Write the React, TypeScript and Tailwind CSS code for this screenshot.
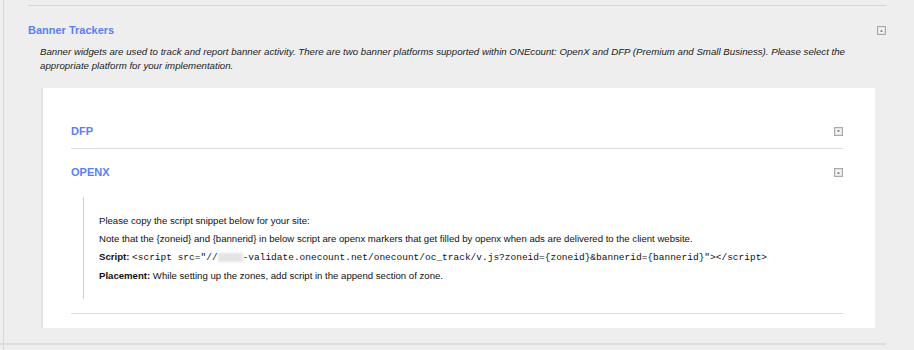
const ToggleIcon = ({ open }: { open: boolean }) => (
    <svg width="9" height="9" viewBox="0 0 9 9" className="block">
        <rect x="0.5" y="0.5" width="8" height="8" fill="#f4f4f4" stroke="#a9a9a9" />
        <rect x="1.5" y="1.5" width="6" height="6" fill="none" stroke="#e2e2e2" />
        {open ? (
            <path d="M3 5.5 L4.5 4 L6 5.5 Z" fill="#444" />
        ) : (
            <path d="M3 3.5 L4.5 5 L6 3.5 Z" fill="#444" />
        )}
    </svg>
)

const App = () => {
    return (
        <div className="w-[914px] h-[350px] overflow-hidden bg-[#eeeeee] font-['Liberation_Sans',Arial,sans-serif] text-[#111]">
            <div className="ml-[3px] h-full border-l border-[#d6d6d6]">
                <div className="pt-[5px] pl-[24px] pr-[28px]">
                    <div className="border-t border-[#d4d4d4]" />
                    <div className="flex items-center justify-between mt-[18px] h-[13px]">
                        <h2 className="text-[11px] leading-[13px] font-bold text-[#5a7ff2]">Banner Trackers</h2>
                        <ToggleIcon open />
                    </div>
                    <p className="mt-[8px] ml-[12px] mr-[11px] text-[9.7px] leading-[14px] italic text-[#222]">
                        Banner widgets are used to track and report banner activity. There are two banner platforms supported within ONEcount: OpenX and DFP (Premium and Small Business). Please select the appropriate platform for your implementation.
                    </p>
                    <div className="mt-[15px] ml-[13px] mr-[11px] h-[240px] bg-white border-l-2 border-[#e2e2e2] pl-[28px] pr-[32px] pt-[37px]">
                        <div className="flex items-center justify-between h-[13px]">
                            <span className="text-[11px] leading-[13px] font-bold text-[#5a7ff2]">DFP</span>
                            <ToggleIcon open={false} />
                        </div>
                        <div className="mt-[10px] border-t border-[#dcdcdc]" />
                        <div className="flex items-center justify-between h-[13px] mt-[17px]">
                            <span className="text-[11px] leading-[13px] font-bold text-[#5a7ff2]">OPENX</span>
                            <ToggleIcon open />
                        </div>
                        <div className="mt-[18px] ml-[12px] border-l border-[#d0d0d0] pl-[15px] pt-[15px] pb-[14px] text-[9.6px] leading-[18px] text-[#111]">
                            <p>Please copy the script snippet below for your site:</p>
                            <p>Note that the {"{zoneid}"} and {"{bannerid}"} in below script are openx markers that get filled by openx when ads are delivered to the client website.</p>
                            <p>
                                <span className="font-bold">Script:</span>{" "}
                                <span className="font-['Liberation_Mono','Courier_New',monospace] text-[9.5px]">
                                    {'<script src="//'}
                                    <span className="inline-block w-[25px] h-[9px] align-middle bg-[#e4e4e4] blur-[1px]" />
                                    {'-validate.onecount.net/onecount/oc_track/v.js?zoneid={zoneid}&bannerid={bannerid}"></script>'}
                                </span>
                            </p>
                            <p>
                                <span className="font-bold">Placement:</span> While setting up the zones, add script in the append section of zone.
                            </p>
                        </div>
                        <div className="mt-[14px] border-t border-[#dcdcdc]" />
                    </div>
                </div>
                <div className="mt-[15px] mr-[28px] -ml-[4px] border-t-2 border-[#dddddd]" />
            </div>
        </div>
    )
}

export default App
